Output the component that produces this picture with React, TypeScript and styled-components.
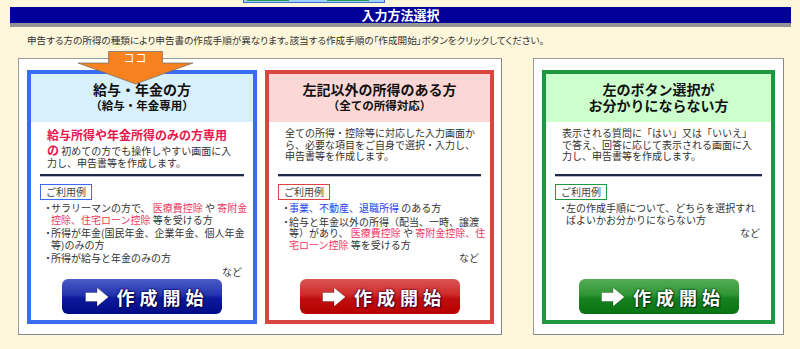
import React from 'react';
import styled, { createGlobalStyle } from 'styled-components';

const GlobalStyle = createGlobalStyle`
  html, body { margin: 0; padding: 0; background: #fef7dc; }
  body {
    font-family: "Noto Sans CJK JP", "Noto Sans", sans-serif;
    color: #333;
  }
  * { box-sizing: border-box; }
`;

type Tone = 'blue' | 'red' | 'green';

const tones: Record<Tone, { border: string; head: string; btn: string; glow: string; tag: string }> = {
  blue: {
    border: '#3a6cf2',
    head: '#d8f0fb',
    tag: '#3a6cf2',
    btn: 'linear-gradient(180deg, #4b5cc9 0%, #2434ad 45%, #0d1a9c 55%, #000b86 100%)',
    glow: '#000044',
  },
  red: {
    border: '#d9463f',
    head: '#fbd7d5',
    tag: '#d9463f',
    btn: 'linear-gradient(180deg, #d95555 0%, #cf2a2a 45%, #c00f0f 55%, #b70000 100%)',
    glow: '#440033',
  },
  green: {
    border: '#1f9640',
    head: '#ccffcc',
    tag: '#1f9640',
    btn: 'linear-gradient(180deg, #56ad56 0%, #2f9535 45%, #168220 55%, #0a7212 100%)',
    glow: '#003311',
  },
};

const Page = styled.div`
  position: relative;
  width: 800px;
  height: 349px;
  overflow: hidden;
`;

const TopStrip = styled.div`
  margin-left: 243px;
  width: 142px;
  height: 3px;
  background: #9fd0ff;
  border-bottom: 1px solid #3a6cd6;
  border-left: 1px solid #3a6cd6;
  border-right: 1px solid #3a6cd6;
  display: flex;
  gap: 38px;
  padding-left: 3px;
`;

const StripSeg = styled.span`
  width: 42px;
  height: 1px;
  background: #2a9a4a;
`;

const TitleBar = styled.h1`
  margin: 4px 9px 0 10px;
  height: 20px;
  background: #000099;
  border-bottom: 4px solid #949494;
  color: #fff;
  font-size: 13px;
  font-weight: 700;
  line-height: 16px;
  text-align: center;
`;

const Intro = styled.p`
  margin: 6px 0 0 27px;
  font-size: 9.6px;
  line-height: 14px;
  font-feature-settings: "palt";
  color: #333;
`;

const FrameRow = styled.div`
  display: flex;
  align-items: flex-start;
  gap: 31px;
  margin: 11px 0 0 18px;
`;

const Frame = styled.div<{ $padRight: number }>`
  display: flex;
  gap: 8px;
  background: #fff;
  border: 1px solid #9a9a9a;
  border-right-color: #888;
  border-bottom-color: #888;
  padding: 11px ${(p) => p.$padRight}px 10px 8px;
`;

const Panel = styled.section<{ $tone: Tone; $w: number }>`
  width: ${(p) => p.$w}px;
  height: 254px;
  border: 4px solid ${(p) => tones[p.$tone].border};
  background: #fff;
  display: flex;
  flex-direction: column;
`;

const PanelHead = styled.div<{ $tone: Tone }>`
  height: 48px;
  flex-shrink: 0;
  background: ${(p) => tones[p.$tone].head};
  display: flex;
  flex-direction: column;
  align-items: center;
  justify-content: center;
  padding-bottom: 2px;
  color: #111;
  font-weight: 700;
`;

const HeadTitle = styled.div`
  font-size: 14px;
  line-height: 16px;
  white-space: nowrap;
`;

const HeadSub = styled.div`
  font-size: 11.5px;
  line-height: 16px;
  white-space: nowrap;
`;

const PanelBody = styled.div`
  flex: 1;
  display: flex;
  flex-direction: column;
  padding: 5px 9px 6px 9px;
`;

const Desc = styled.p`
  margin: 0;
  height: 46px;
  padding: 0 4px 0 7px;
  font-size: 10px;
  line-height: 11.5px;
  white-space: nowrap;
  color: #333;
`;

const Lead = styled.strong`
  color: #e5174b;
  font-size: 12px;
  line-height: 15px;
  font-weight: 700;
`;

const Divider = styled.hr`
  margin: 1px 0 0;
  height: 3px;
  border: none;
  border-top: 2px solid #1f2a4a;
  border-bottom: 1px solid #b6bccb;
`;

const UsageTag = styled.div<{ $tone: Tone }>`
  align-self: flex-start;
  margin-top: 7px;
  border: 1px solid ${(p) => tones[p.$tone].tag};
  padding: 0 5px;
  font-size: 10px;
  line-height: 14px;
  color: #444;
  background: #fff;
`;

const List = styled.ul`
  margin: 2px 0 0;
  padding: 0 0 0 5px;
  list-style: none;
  font-size: 10px;
  line-height: 11.5px;
  color: #333;
`;

const Item = styled.li`
  display: flex;
  margin-bottom: 2px;
  white-space: nowrap;
`;

const Bullet = styled.span`
  width: 6px;
  flex-shrink: 0;
  display: flex;
  justify-content: center;
`;

const Pink = styled.span`
  color: #ec3a62;
`;

const Blue = styled.span`
  color: #2342ee;
`;

const Etc = styled.div`
  text-align: right;
  padding-right: 2px;
  font-size: 10px;
  line-height: 12px;
  color: #333;
`;

const StartButton = styled.button<{ $tone: Tone }>`
  margin-top: auto;
  align-self: center;
  width: 160px;
  height: 35px;
  border: none;
  border-radius: 6px;
  background: ${(p) => tones[p.$tone].btn};
  display: flex;
  align-items: center;
  justify-content: center;
  gap: 8px;
  padding: 0 0 0 4px;
  color: #fff;
  font-family: "Noto Sans CJK JP", sans-serif;
  font-size: 18px;
  font-weight: 700;
  letter-spacing: 5px;
  text-shadow: 0 0 2px ${(p) => tones[p.$tone].glow}, 0 0 2px ${(p) => tones[p.$tone].glow},
    1px 1px 1px ${(p) => tones[p.$tone].glow};
  cursor: pointer;
`;

const BtnLabel = styled.span`
  margin-right: -5px;
  line-height: 20px;
`;

const Marker = styled.div`
  position: absolute;
  left: 77px;
  top: 51px;
  width: 117px;
  height: 34px;
`;

const MarkerLabel = styled.span`
  position: absolute;
  left: 31px;
  top: 0px;
  width: 55px;
  text-align: center;
  color: #fff;
  font-size: 11px;
  line-height: 13px;
  letter-spacing: 1px;
`;

const Arrow = () => (
  <svg width="24" height="20" viewBox="0 0 24 20">
    <polygon
      points="0.5,5.5 12,5.5 12,0.5 23.5,10 12,19.5 12,14.5 0.5,14.5"
      fill="#fff"
      stroke="rgba(0,0,0,0.25)"
      strokeWidth="1"
    />
  </svg>
);

const StartBtn = ({ tone }: { tone: Tone }) => (
  <StartButton $tone={tone}>
    <Arrow />
    <BtnLabel>作成開始</BtnLabel>
  </StartButton>
);

const B = () => <Bullet>・</Bullet>;

export default function App() {
  return (
    <>
      <GlobalStyle />
      <Page>
        <TopStrip>
          <StripSeg />
          <StripSeg />
        </TopStrip>
        <TitleBar>入力方法選択</TitleBar>
        <Intro>
          申告する方の所得の種類により申告書の作成手順が異なります。該当する作成手順の「作成開始」ボタンをクリックしてください。
        </Intro>
        <FrameRow>
          <Frame $padRight={7}>
            <Panel $tone="blue" $w={230}>
              <PanelHead $tone="blue">
                <HeadTitle>給与・年金の方</HeadTitle>
                <HeadSub>（給与・年金専用）</HeadSub>
              </PanelHead>
              <PanelBody>
                <Desc>
                  <Lead>給与所得や年金所得のみの方専用</Lead>
                  <br />
                  <Lead>の</Lead> 初めての方でも操作しやすい画面に入
                  <br />
                  力し、申告書等を作成します。
                </Desc>
                <Divider />
                <UsageTag $tone="blue">ご利用例</UsageTag>
                <List>
                  <Item>
                    <B />
                    <span>
                      サラリーマンの方で、 <Pink>医療費控除</Pink> や <Pink>寄附金</Pink>
                      <br />
                      <Pink>控除、住宅ローン控除</Pink> 等を受ける方
                    </span>
                  </Item>
                  <Item>
                    <B />
                    <span>
                      所得が年金(国民年金、企業年金、個人年金
                      <br />
                      等)のみの方
                    </span>
                  </Item>
                  <Item>
                    <B />
                    <span>所得が給与と年金のみの方</span>
                  </Item>
                </List>
                <Etc>など</Etc>
                <StartBtn tone="blue" />
              </PanelBody>
            </Panel>
            <Panel $tone="red" $w={229}>
              <PanelHead $tone="red">
                <HeadTitle>左記以外の所得のある方</HeadTitle>
                <HeadSub>（全ての所得対応）</HeadSub>
              </PanelHead>
              <PanelBody>
                <Desc>
                  全ての所得・控除等に対応した入力画面か
                  <br />
                  ら、必要な項目をご自身で選択・入力し、
                  <br />
                  申告書等を作成します。
                </Desc>
                <Divider />
                <UsageTag $tone="red">ご利用例</UsageTag>
                <List>
                  <Item>
                    <B />
                    <span>
                      <Blue>事業、不動産、退職所得</Blue> のある方
                    </span>
                  </Item>
                  <Item>
                    <B />
                    <span>
                      給与と年金以外の所得（配当、一時、譲渡
                      <br />
                      等）があり、 <Pink>医療費控除</Pink> や <Pink>寄附金控除、住</Pink>
                      <br />
                      <Pink>宅ローン控除</Pink> 等を受ける方
                    </span>
                  </Item>
                </List>
                <Etc>など</Etc>
                <StartBtn tone="red" />
              </PanelBody>
            </Panel>
          </Frame>
          <Frame $padRight={8}>
            <Panel $tone="green" $w={233}>
              <PanelHead $tone="green">
                <HeadTitle>左のボタン選択が</HeadTitle>
                <HeadTitle>お分かりにならない方</HeadTitle>
              </PanelHead>
              <PanelBody>
                <Desc>
                  表示される質問に「はい」又は「いいえ」
                  <br />
                  で答え、回答に応じて表示される画面に入
                  <br />
                  力し、申告書等を作成します。
                </Desc>
                <Divider />
                <UsageTag $tone="green">ご利用例</UsageTag>
                <List>
                  <Item>
                    <B />
                    <span>
                      左の作成手順について、どちらを選択すれ
                      <br />
                      ばよいかお分かりにならない方
                    </span>
                  </Item>
                </List>
                <Etc>など</Etc>
                <StartBtn tone="green" />
              </PanelBody>
            </Panel>
          </Frame>
        </FrameRow>
        <Marker>
          <svg width="117" height="34" viewBox="0 0 117 34">
            <polygon
              points="31.5,0.5 85.5,0.5 85.5,12 116,12 58.5,33 1,12 31.5,12"
              fill="#f5821f"
              stroke="rgba(110,110,110,0.7)"
              strokeWidth="1"
            />
          </svg>
          <MarkerLabel>ココ</MarkerLabel>
        </Marker>
      </Page>
    </>
  );
}
